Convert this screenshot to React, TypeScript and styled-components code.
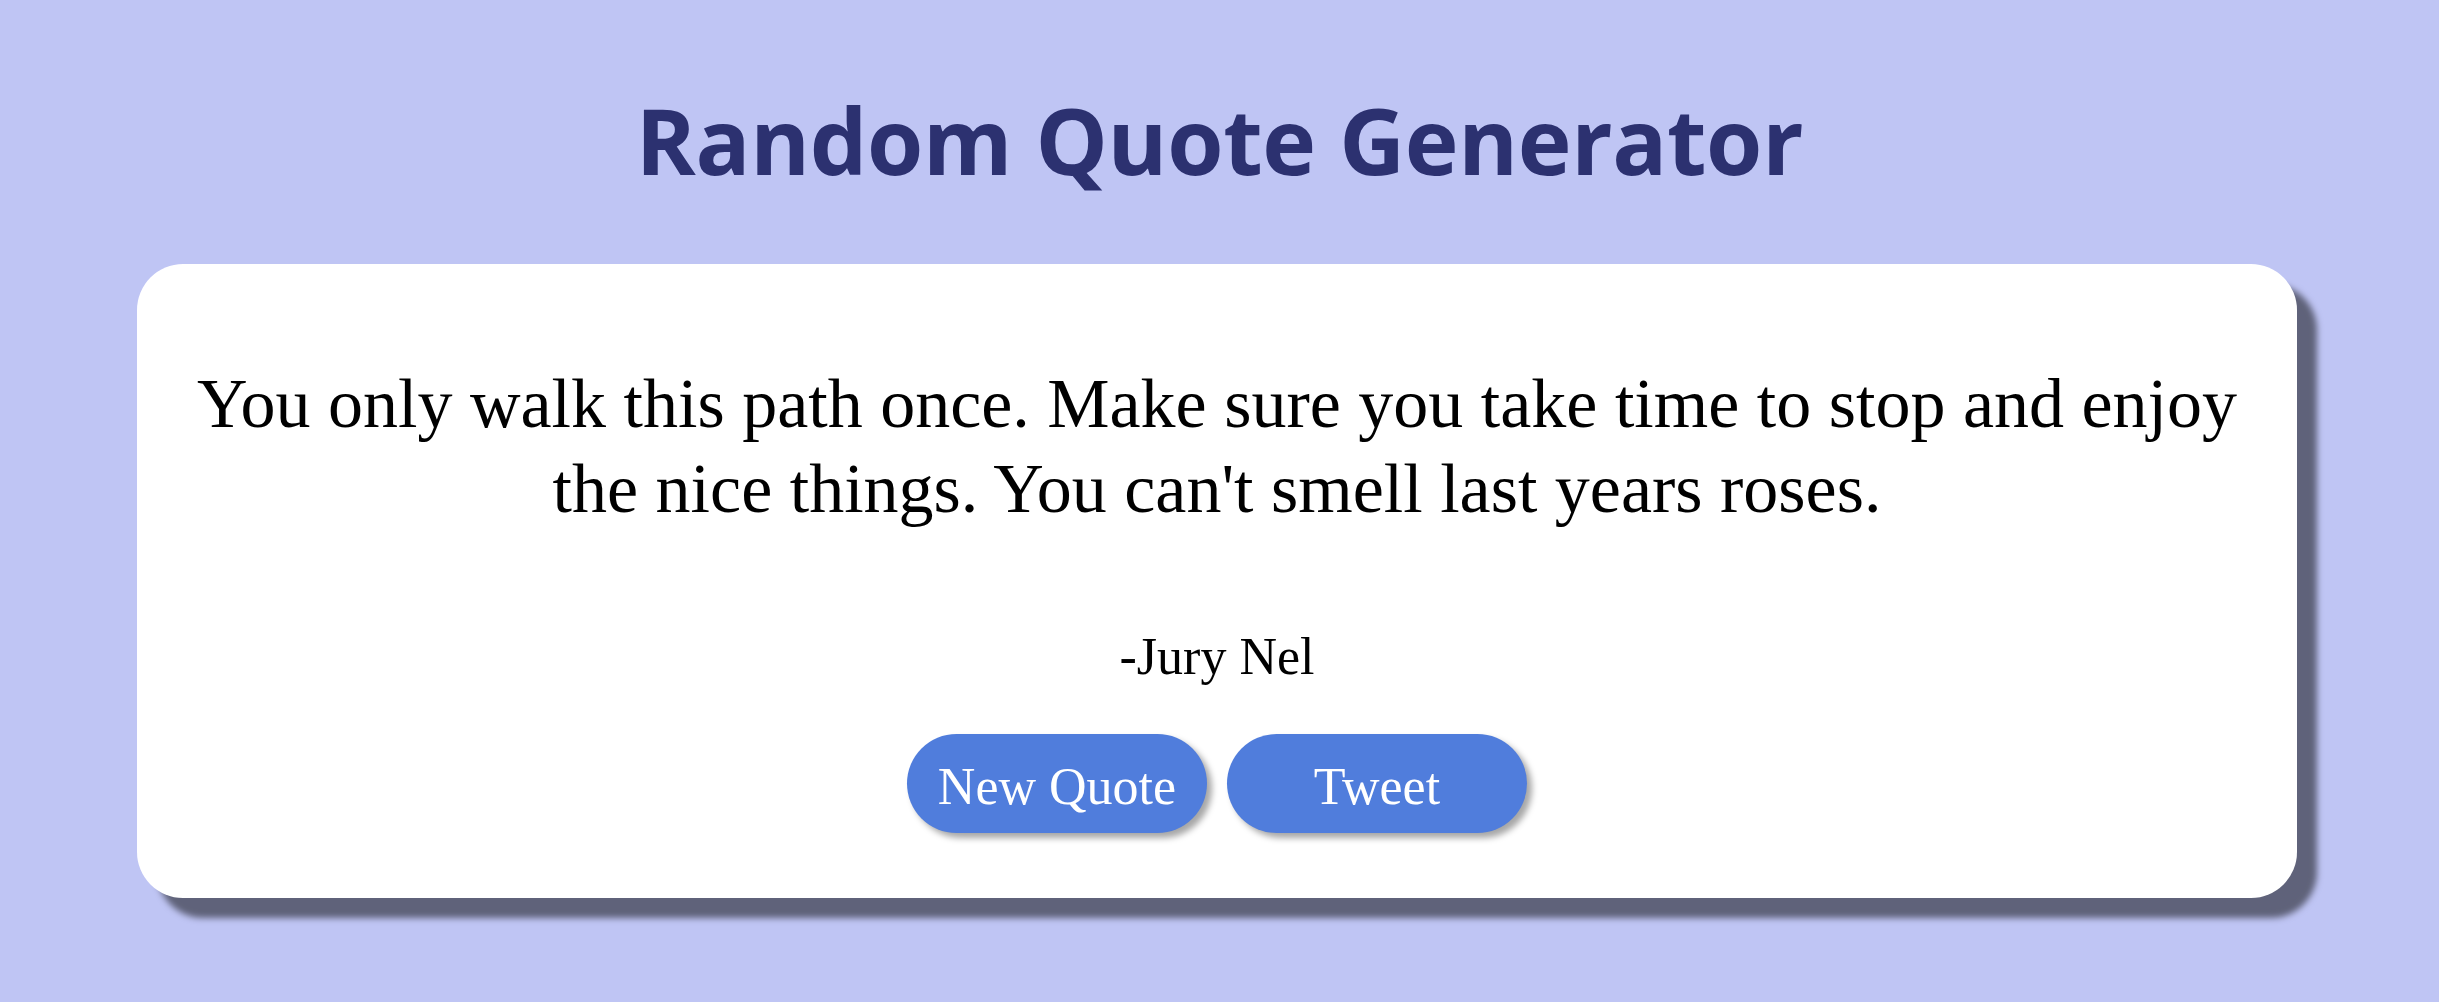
import React from "react";
import styled, { createGlobalStyle } from "styled-components";

const Global = createGlobalStyle`
  html, body { margin: 0; padding: 0; background: #bfc5f4; }
  body { font-family: "Liberation Serif", serif; }
`;

const Page = styled.main`
  display: flex;
  flex-direction: column;
  align-items: center;
  padding-top: 76px;
  min-height: 1002px;
  box-sizing: border-box;
`;

const Title = styled.h1`
  margin: 0;
  font-family: "Open Sans", "Noto Sans", sans-serif;
  font-weight: 700;
  font-size: 91px;
  line-height: 128px;
  letter-spacing: -0.3px;
  color: #2c3170;
`;

const Card = styled.section`
  margin-top: 60px;
  width: 2160px;
  margin-left: -5px;
  box-sizing: border-box;
  background: #ffffff;
  border-radius: 46px;
  box-shadow: 20px 20px 6px rgba(0, 0, 0, 0.5);
  padding: 97px 36px 65px;
  display: flex;
  flex-direction: column;
  align-items: center;
`;

const Quote = styled.p`
  margin: 0;
  font-size: 70px;
  line-height: 85px;
  text-align: center;
  color: #000;
`;

const Author = styled.p`
  margin: 91px 0 0;
  font-size: 52px;
  line-height: 70px;
  color: #000;
`;

const ButtonRow = styled.div`
  margin-top: 42px;
  display: flex;
  gap: 20px;
`;

const Button = styled.button`
  width: 300px;
  height: 99px;
  border: none;
  border-radius: 50px;
  background: #507ddc;
  color: #ffffff;
  font-family: "Liberation Serif", serif;
  font-size: 52px;
  white-space: nowrap;
  padding: 6px 0 0;
  box-shadow: 5px 5px 6px rgba(0, 0, 0, 0.35);
  cursor: pointer;
`;

export default function App() {
  return (
    <>
      <Global />
      <Page>
        <Title>Random Quote Generator</Title>
        <Card>
          <Quote>
            You only walk this path once. Make sure you take time to stop and enjoy the nice things. You can't smell last years roses.
          </Quote>
          <Author>-Jury Nel</Author>
          <ButtonRow>
            <Button>New Quote</Button>
            <Button>Tweet</Button>
          </ButtonRow>
        </Card>
      </Page>
    </>
  );
}
